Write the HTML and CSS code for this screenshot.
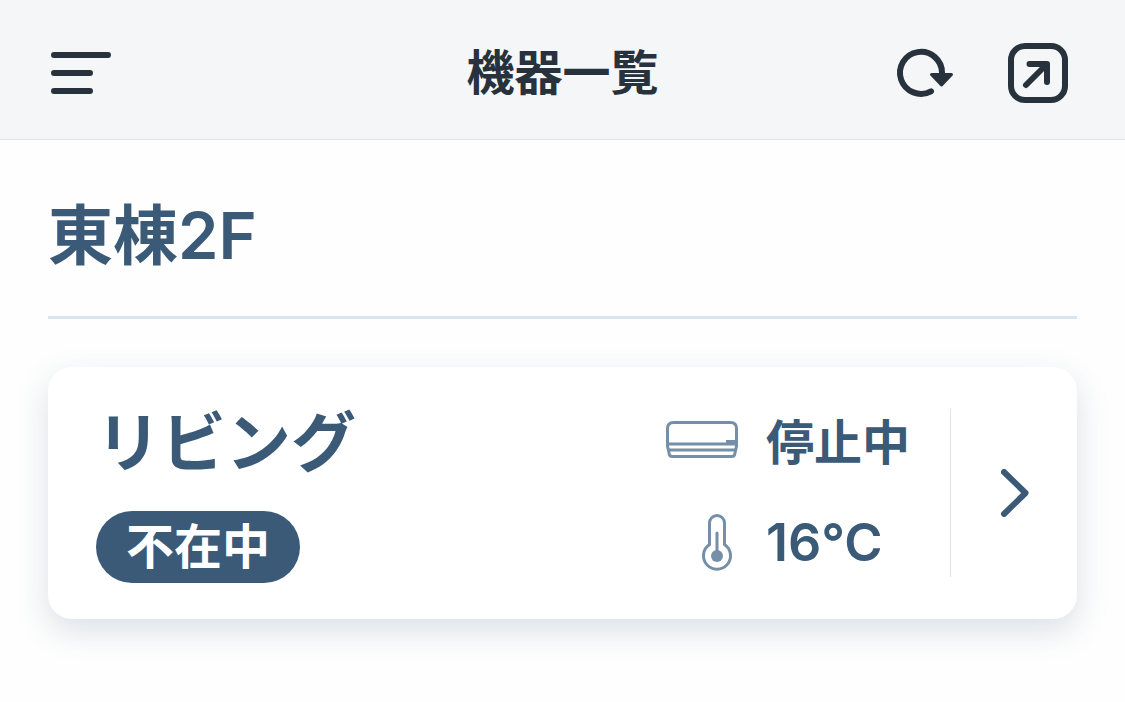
FILE: index.html
```html
<!DOCTYPE html>
<html lang="ja">
<head>
<meta charset="utf-8">
<meta name="viewport" content="width=device-width, initial-scale=1">
<title>機器一覧</title>
<link rel="stylesheet" href="styles.css">
</head>
<body>
<header class="topbar">
  <div class="topbar-start">
    <button class="icon-button" type="button" aria-label="メニュー">
      <svg width="60" height="60" viewBox="0 0 60 60" fill="none" stroke="currentColor" stroke-width="6" stroke-linecap="round" aria-hidden="true">
        <path d="M3 12H57M3 30H39M3 48H39"/>
      </svg>
    </button>
  </div>
  <h1 class="topbar-title">機器一覧</h1>
  <div class="topbar-end">
    <button class="icon-button" type="button" aria-label="更新">
      <svg width="60" height="60" viewBox="0 0 60 60" fill="none" stroke="currentColor" stroke-width="6" stroke-linecap="round" stroke-linejoin="round" aria-hidden="true">
        <path d="M48 34V30A21 21 0 1 0 37 48.300"/>
        <path d="M37.500 31.500H57.500L47.500 42Z" fill="currentColor" stroke-width="3"/>
      </svg>
    </button>
    <button class="icon-button" type="button" aria-label="外部で開く">
      <svg width="60" height="60" viewBox="0 0 60 60" fill="none" stroke="currentColor" stroke-width="6" stroke-linecap="round" stroke-linejoin="round" aria-hidden="true">
        <rect x="3" y="3" width="54" height="54" rx="14"/>
        <path d="M18 42L37 23M21.500 21H39V39"/>
      </svg>
    </button>
  </div>
</header>
<main class="content">
  <h2 class="floor-title">東棟2F</h2>
  <a class="device-card" href="#living">
    <span class="room">
      <span class="room-name">リビング</span>
      <span class="presence">不在中</span>
    </span>
    <span class="readings">
      <span class="reading">
        <svg class="reading-icon" width="72" height="72" viewBox="0 0 72 72" fill="none" stroke="currentColor" stroke-width="3" aria-hidden="true">
          <path d="M1.500 39V21.500Q1.500 15.500 7.500 15.500H64.500Q70.500 15.500 70.500 21.500V39L68.500 48Q68 49.500 65.500 49.500H6.500Q4 49.500 3.500 48L1.500 39Z"/>
          <path d="M1.500 37H70.500M2 43H70M60 34.500H70"/>
        </svg>
        <span>停止中</span>
      </span>
      <span class="reading">
        <svg class="reading-icon" width="72" height="72" viewBox="0 0 72 72" fill="none" stroke="currentColor" stroke-width="3" aria-hidden="true">
          <path d="M43.500 37.500V16A7.500 7.500 0 0 1 58.500 16V37.500A13.500 13.500 0 1 1 43.500 37.500Z"/>
          <path d="M51 26V49" stroke-linecap="round"/>
          <circle cx="51" cy="49" r="6" fill="currentColor" stroke="none"/>
        </svg>
        <span class="temperature">16°C</span>
      </span>
    </span>
    <span class="card-go">
      <svg width="28" height="48" viewBox="0 0 28 48" fill="none" stroke="currentColor" stroke-width="6" stroke-linecap="round" stroke-linejoin="round" aria-hidden="true">
        <path d="M3 3L24.500 24L3 45"/>
      </svg>
    </span>
  </a>
</main>
</body>
</html>
```
FILE: styles.css
```css
* { box-sizing: border-box; }

body {
  margin: 0;
  background: #fefefe;
  color: #3b5a78;
  font-family: Inter, "Noto Sans CJK JP", sans-serif;
  font-weight: 600;
}

.topbar {
  display: grid;
  grid-template-columns: 1fr auto 1fr;
  align-items: center;
  padding: 43px 51px 36px;
  border-bottom: 1px solid #dde5ec;
  background: #f4f6f8;
  color: #27323d;
}

.topbar-title {
  margin: 0;
  font-size: 48px;
  font-weight: 600;
  line-height: 60px;
}

.topbar-start,
.topbar-end {
  display: flex;
}

.topbar-end {
  justify-content: flex-end;
  gap: 54px;
  padding-right: 6px;
}

.icon-button {
  display: flex;
  padding: 0;
  border: 0;
  background: none;
  color: inherit;
}

.content {
  padding: 48px;
}

.floor-title {
  margin: 0 0 48px;
  padding-bottom: 32px;
  border-bottom: 3px solid #dbe4ef;
  font-size: 65px;
  font-weight: 600;
  line-height: 96px;
}

.device-card {
  display: flex;
  align-items: center;
  padding: 36px 0 36px 48px;
  border-radius: 24px;
  background: #fff;
  box-shadow: 0 12px 32px rgba(59, 90, 120, 0.18);
  color: inherit;
  text-decoration: none;
}

.room {
  display: flex;
  flex: 1;
  flex-direction: column;
  align-items: flex-start;
  gap: 28px;
}

.room-name {
  font-size: 65px;
  line-height: 80px;
}

.presence {
  padding: 0 30px;
  border-radius: 36px;
  background: #3b5a78;
  color: #fff;
  font-size: 48px;
  line-height: 72px;
}

.readings {
  display: flex;
  flex-direction: column;
  gap: 28px;
  padding-right: 40px;
}

.reading {
  display: flex;
  align-items: center;
  gap: 28px;
  font-size: 48px;
  line-height: 72px;
}

.temperature {
  font-size: 52px;
}

.reading-icon {
  color: #768fa8;
}

.card-go {
  display: flex;
  align-items: center;
  justify-content: center;
  width: 127px;
  height: 168px;
  padding-left: 2px;
  border-left: 1px solid #dbe4ef;
}
```
